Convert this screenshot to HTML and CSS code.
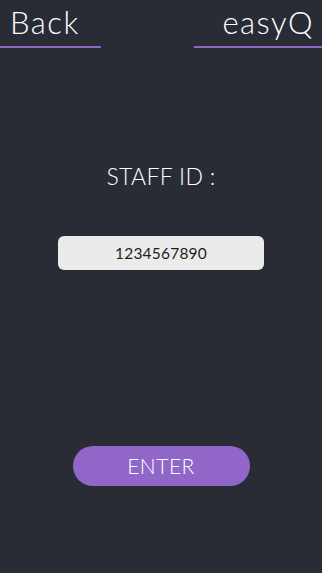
FILE: index.html
```html
<!DOCTYPE html>
<html>
<head>
<meta charset="utf-8">
<link rel="stylesheet" href="styles.css">
</head>
<body>
<div class="screen">
  <header class="top">
    <div class="nav nav-left"><span class="nav-text">Back</span></div>
    <div class="nav nav-right"><span class="nav-text">easyQ</span></div>
  </header>
  <main class="content">
    <div class="label">STAFF ID :</div>
    <div class="field">1234567890</div>
    <div class="btn">ENTER</div>
  </main>
</div>
</body>
</html>
```
FILE: styles.css
```css
html, body {
  margin: 0;
  padding: 0;
  background: #292c35;
}
.screen {
  width: 322px;
  height: 573px;
  background: #292c35;
  font-family: "Lato", "Liberation Sans", sans-serif;
  font-weight: 300;
  color: #ffffff;
  display: flex;
  flex-direction: column;
}
.top {
  display: flex;
  justify-content: space-between;
  height: 49px;
}
.nav {
  display: flex;
  flex-direction: column;
  justify-content: flex-end;
  border-bottom: 2px solid #8b6abf;
  height: 48px;
  box-sizing: border-box;
}
.nav-left {
  width: 101px;
  padding-left: 10px;
}
.nav-right {
  width: 128px;
  align-items: flex-end;
  padding-right: 8px;
}
.nav-text {
  font-size: 31px;
  line-height: 30px;
  letter-spacing: 1.5px;
  padding-bottom: 9px;
}
.content {
  display: flex;
  flex-direction: column;
  align-items: center;
}
.label {
  margin-top: 113px;
  font-size: 23px;
  line-height: 28px;
  letter-spacing: 0.3px;
}
.field {
  margin-top: 46px;
  width: 206px;
  height: 34px;
  background: #ebebeb;
  border-radius: 6px;
  color: #1e1e1e;
  font-size: 15.5px;
  font-weight: 400;
  line-height: 34px;
  text-align: center;
  letter-spacing: 0.2px;
}
.btn {
  margin-top: 176px;
  width: 177px;
  height: 40px;
  border-radius: 20px;
  background: #9166c9;
  color: #ffffff;
  font-size: 21px;
  line-height: 40px;
  text-align: center;
  letter-spacing: 0.5px;
}
```
